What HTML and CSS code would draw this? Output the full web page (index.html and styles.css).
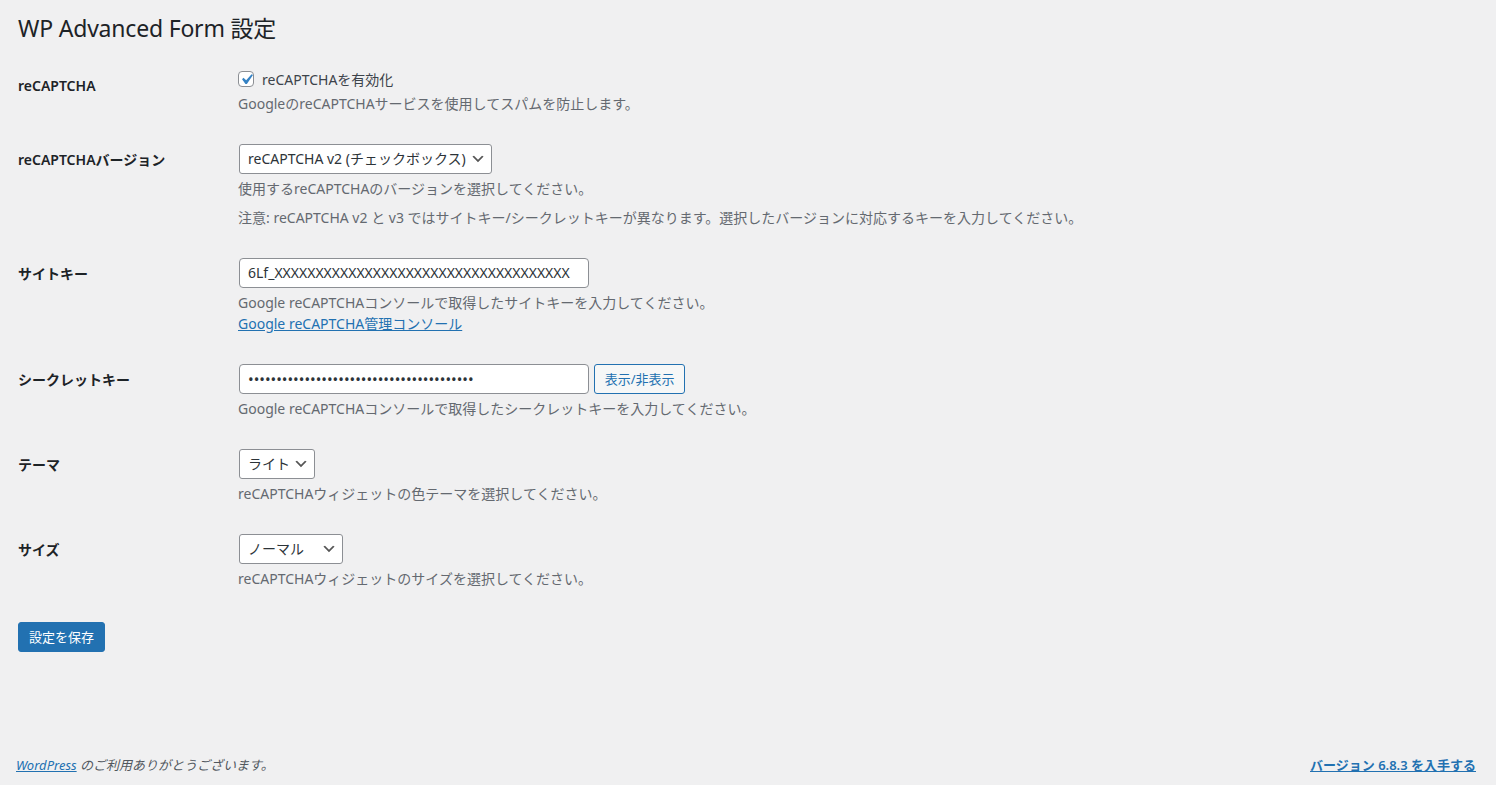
FILE: index.html
```html
<!DOCTYPE html>
<html lang="ja">
<head>
  <meta charset="utf-8"/>
  <meta name="viewport" content="width=device-width,initial-scale=1"/>
  <title>WP Advanced Form 設定</title>
  <link rel="stylesheet" href="styles.css">
</head>
<body>
  <div class="wrap">
    <h1>WP Advanced Form 設定</h1>
    <form id="wpafSettings">
      <table class="form-table">
        <tr>
          <th>reCAPTCHA</th>
          <td>
            <label class="check">
              <input type="checkbox" name="recaptcha_enabled" checked>
              reCAPTCHAを有効化
            </label>
            <p class="description">GoogleのreCAPTCHAサービスを使用してスパムを防止します。</p>
          </td>
        </tr>
        <tr>
          <th>reCAPTCHAバージョン</th>
          <td>
            <select name="recaptcha_version">
              <option value="v2" selected>reCAPTCHA v2 (チェックボックス)</option>
              <option value="v2_invisible">reCAPTCHA v2 (非表示)</option>
              <option value="v3">reCAPTCHA v3</option>
            </select>
            <p class="description">使用するreCAPTCHAのバージョンを選択してください。</p>
            <p class="description note">注意: reCAPTCHA v2 と v3 ではサイトキー/シークレットキーが異なります。選択したバージョンに対応するキーを入力してください。</p>
          </td>
        </tr>
        <tr>
          <th>サイトキー</th>
          <td>
            <input type="text" class="regular-text" name="site_key" value="6Lf_XXXXXXXXXXXXXXXXXXXXXXXXXXXXXXXXXXXX">
            <p class="description">Google reCAPTCHAコンソールで取得したサイトキーを入力してください。<br>
              <a href="#">Google reCAPTCHA管理コンソール</a></p>
          </td>
        </tr>
        <tr>
          <th>シークレットキー</th>
          <td>
            <input type="password" class="regular-text secret" id="secretKey" name="secret_key" value="XXXXXXXXXXXXXXXXXXXXXXXXXXXXXXXXXXXXXXXX">
            <button type="button" class="button" id="toggleSecret">表示/非表示</button>
            <p class="description">Google reCAPTCHAコンソールで取得したシークレットキーを入力してください。</p>
          </td>
        </tr>
        <tr>
          <th>テーマ</th>
          <td>
            <select name="theme">
              <option value="light" selected>ライト</option>
              <option value="dark">ダーク</option>
            </select>
            <p class="description">reCAPTCHAウィジェットの色テーマを選択してください。</p>
          </td>
        </tr>
        <tr>
          <th>サイズ</th>
          <td>
            <select name="size">
              <option value="normal" selected>ノーマル</option>
              <option value="compact">コンパクト</option>
            </select>
            <p class="description">reCAPTCHAウィジェットのサイズを選択してください。</p>
          </td>
        </tr>
      </table>
      <p class="submit"><button type="submit" class="button button-primary">設定を保存</button></p>
    </form>
  </div>

  <footer id="wpfooter">
    <p><a href="#">WordPress</a> のご利用ありがとうございます。</p>
    <p class="upgrade"><a href="#">バージョン 6.8.3 を入手する</a></p>
  </footer>

  <script>
    document.getElementById("toggleSecret").onclick = () => {
      const f = document.getElementById("secretKey");
      f.type = f.type === "password" ? "text" : "password";
    };
  </script>
</body>
</html>
```

FILE: styles.css
```css
html, body {
  margin: 0;
  min-height: 100vh;
}
body {
  display: flex;
  flex-direction: column;
  background: #f0f0f1;
  color: #3c434a;
  font-family: "Noto Sans", "Noto Sans CJK JP", sans-serif;
  font-size: 14px;
  line-height: 1.4;
}
.wrap {
  padding: 5px 20px 0 18px;
}
h1 {
  margin: 0;
  padding: 9px 0 4px;
  font-size: 23px;
  font-weight: 400;
  line-height: 1.3;
  letter-spacing: -0.2px;
  color: #1d2327;
}
a {
  color: #2271b1;
}

/* settings table */
.form-table {
  border-collapse: collapse;
  margin-top: 7px;
  width: 100%;
}
.form-table th {
  width: 200px;
  padding: 20px 10px 20px 0;
  vertical-align: top;
  text-align: left;
  font-weight: 600;
  line-height: 1.5;
  color: #1d2327;
}
.form-table td {
  padding: 15px 10px;
  vertical-align: top;
  line-height: 1.4;
}
.description {
  margin: 4px 0 0;
  line-height: 1.5;
  color: #646970;
}
.description.note {
  margin-top: 8px;
}

/* fields */
.check {
  display: flex;
  align-items: center;
  gap: 8px;
  height: 19px;
}
input[type=checkbox] {
  appearance: none;
  width: 16px;
  height: 16px;
  margin: 0;
  border: 1px solid #8c8f94;
  border-radius: 4px;
  background: #fff url("data:image/svg+xml;utf8,%3Csvg xmlns='http://www.w3.org/2000/svg' viewBox='0 0 20 20'%3E%3Cpath d='M14.83 4.89l1.34.94-5.81 8.38H9.02L5.78 9.67l1.34-1.25 2.57 2.4z' fill='%233582c4'/%3E%3C/svg%3E") no-repeat -3px -3px / 21px 21px;
}
input.regular-text {
  box-sizing: border-box;
  width: 350px;
  height: 30px;
  margin: 0 0 0 1px;
  padding: 0 8px;
  border: 1px solid #8c8f94;
  border-radius: 4px;
  background: #fff;
  color: #2c3338;
  font: inherit;
  vertical-align: middle;
}
input.secret {
  font-size: 15px;
}
select {
  height: 30px;
  margin: 0 0 0 1px;
  padding: 0 24px 0 8px;
  border: 1px solid #8c8f94;
  border-radius: 3px;
  appearance: none;
  background: #fff url("data:image/svg+xml;utf8,%3Csvg width='20' height='20' xmlns='http://www.w3.org/2000/svg'%3E%3Cpath d='M5 6l5 5 5-5 2 1-7 7-7-7 2-1z' fill='%23555'/%3E%3C/svg%3E") no-repeat right 5px top 55% / 16px 16px;
  color: #2c3338;
  font: inherit;
  vertical-align: middle;
}

/* buttons */
.button {
  box-sizing: border-box;
  min-height: 30px;
  margin-left: 1px;
  padding: 0 10px;
  border: 1px solid #2271b1;
  border-radius: 3px;
  background: #f6f7f7;
  color: #2271b1;
  font-family: inherit;
  font-size: 13px;
  line-height: 28px;
  cursor: pointer;
  vertical-align: middle;
}
.button-primary {
  margin: 0;
  background: #2271b1;
  color: #fff;
}
.button-primary:hover {
  background: #135e96;
}
.submit {
  margin: 18px 0 0;
}

/* footer */
#wpfooter {
  margin-top: auto;
  display: flex;
  justify-content: space-between;
  padding: 10px 20px 10px 16px;
  font-size: 13px;
  line-height: 20px;
  color: #50575e;
}
#wpfooter p {
  margin: 0;
}
#wpfooter p:first-child {
  font-style: italic;
}
#wpfooter .upgrade a {
  font-weight: 600;
}
```
